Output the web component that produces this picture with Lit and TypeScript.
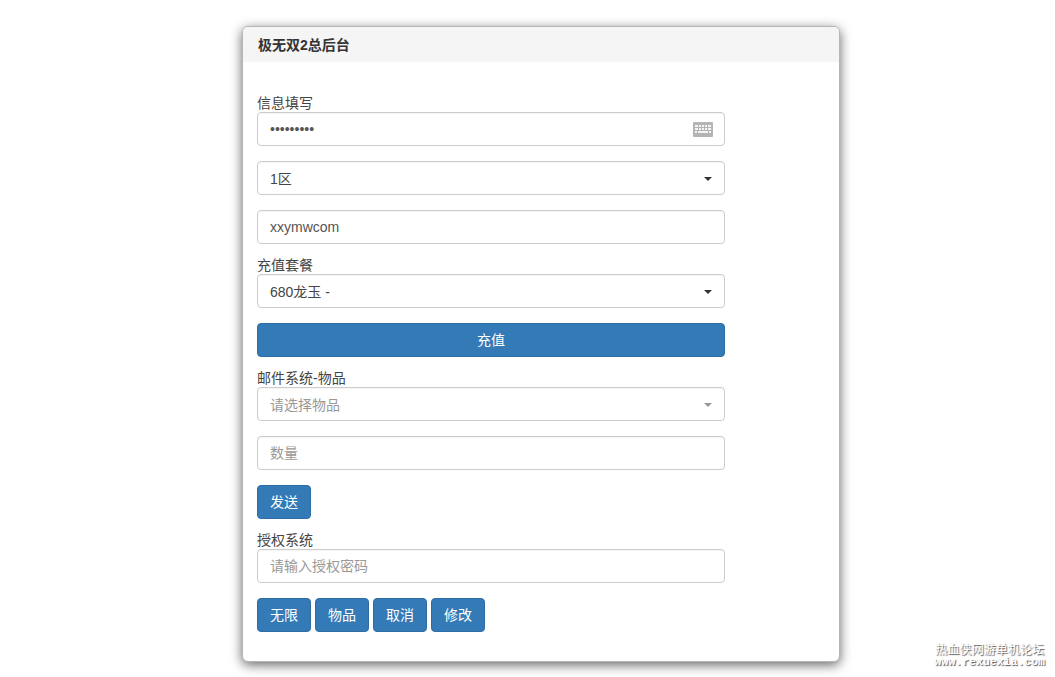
import { LitElement, html, css, svg } from "lit";
import { customElement } from "lit/decorators.js";

const keyboard = svg`<svg class="kb" width="20" height="15" viewBox="0 0 20 15" aria-hidden="true">
  <rect width="20" height="15" rx="1" fill="#b4b4b4"/>
  <g fill="#f4f4f4">
    <rect x="2" y="3" width="3" height="2"/><rect x="6" y="3" width="2" height="2"/><rect x="9" y="3" width="2" height="2"/><rect x="12" y="3" width="2" height="2"/><rect x="15" y="3" width="3" height="2"/>
    <rect x="2" y="6" width="3" height="2"/><rect x="6" y="6" width="2" height="2"/><rect x="9" y="6" width="2" height="2"/><rect x="12" y="6" width="2" height="2"/><rect x="15" y="6" width="3" height="2"/>
    <rect x="2" y="9" width="2" height="2"/><rect x="5" y="9" width="10" height="2"/><rect x="16" y="9" width="2" height="2"/>
  </g>
</svg>`;

@customElement("app-root")
export class AppRoot extends LitElement {
  static styles = css`
    :host {
      display: block;
      position: relative;
      height: 677px;
      overflow: hidden;
      background: #fff;
      font-family: "Liberation Sans", "Noto Sans CJK SC", Arial, sans-serif;
      font-size: 14px;
      color: #333;
    }
    * { box-sizing: border-box; }
    .page { padding: 26px 0 0 242px; }
    .panel {
      width: 598px;
      height: 636px;
      background: #fff;
      border: 1px solid #b5b5b5;
      border-radius: 6px;
      box-shadow: 0 3px 12px rgba(0, 0, 0, 0.6);
      overflow: hidden;
    }
    .heading {
      height: 35px;
      background: #f5f5f5;
      padding: 0 15px 2px;
      display: flex;
      align-items: center;
      font-size: 14px;
      font-weight: 700;
      color: #333;
    }
    .body { padding: 35px 15px 0 14px; width: 497px; }
    .group { margin-bottom: 15px; }
    label { display: block; height: 15px; line-height: 13px; color: #444; font-size: 14px; }
    .control {
      position: relative;
      display: flex;
      align-items: center;
      width: 100%;
      height: 34px;
      padding: 0 12px;
      border: 1px solid #ccc;
      border-radius: 4px;
      background: #fff;
      font: inherit;
      color: #555;
      box-shadow: inset 0 1px 1px rgba(0, 0, 0, 0.04);
      outline: none;
    }
    input.control::placeholder { color: #999; opacity: 1; }
    .select { color: #444; }
    .select.empty { color: #999; }
    .caret {
      position: absolute;
      right: 12px;
      top: 15px;
      width: 0;
      height: 0;
      border-left: 4px solid transparent;
      border-right: 4px solid transparent;
      border-top: 4px solid #333;
    }
    .empty .caret { border-top-color: #999; }
    .pw { position: relative; }
    .kb { position: absolute; right: 12px; top: 10px; }
    .btn {
      display: inline-block;
      height: 34px;
      padding: 0 12px 2px;
      border: 1px solid #2e6da4;
      border-radius: 4px;
      background: #337ab7;
      color: #fff;
      font: inherit;
    }
    .block { display: block; width: 100%; }
    .row { display: flex; gap: 4px; }
    .mark {
      position: absolute;
      right: 10px;
      bottom: 9px;
      text-align: center;
      color: #fff;
      text-shadow: 1px 1px 1px #555;
      line-height: 12px;
    }
    .mark .cn { font-size: 12px; letter-spacing: 0.1px; }
    .mark .en { font-family: "Liberation Mono", monospace; font-size: 11.5px; font-weight: 700; letter-spacing: 0; }
  `;

  render() {
    return html`
      <div class="page">
        <section class="panel">
          <div class="heading">极无双2总后台</div>
          <form class="body" @submit=${(e: Event) => e.preventDefault()}>
            <div class="group">
              <label>信息填写</label>
              <div class="pw">
                <input class="control" type="password" value="123456789" />
                ${keyboard}
              </div>
            </div>
            <div class="group"><div class="control select">1区<span class="caret"></span></div></div>
            <div class="group"><input class="control" type="text" value="xxymwcom" /></div>
            <div class="group">
              <label>充值套餐</label>
              <div class="control select">680龙玉 -<span class="caret"></span></div>
            </div>
            <div class="group"><button class="btn block" type="button">充值</button></div>
            <div class="group">
              <label>邮件系统-物品</label>
              <div class="control select empty">请选择物品<span class="caret"></span></div>
            </div>
            <div class="group"><input class="control" type="text" placeholder="数量" /></div>
            <div class="group"><button class="btn" type="button">发送</button></div>
            <div class="group">
              <label>授权系统</label>
              <input class="control" type="text" placeholder="请输入授权密码" />
            </div>
            <div class="row">
              <button class="btn" type="button">无限</button>
              <button class="btn" type="button">物品</button>
              <button class="btn" type="button">取消</button>
              <button class="btn" type="button">修改</button>
            </div>
          </form>
        </section>
      </div>
      <div class="mark">
        <div class="cn">热血侠网游单机论坛</div>
        <div class="en">www.rexuexia.com</div>
      </div>
    `;
  }
}
